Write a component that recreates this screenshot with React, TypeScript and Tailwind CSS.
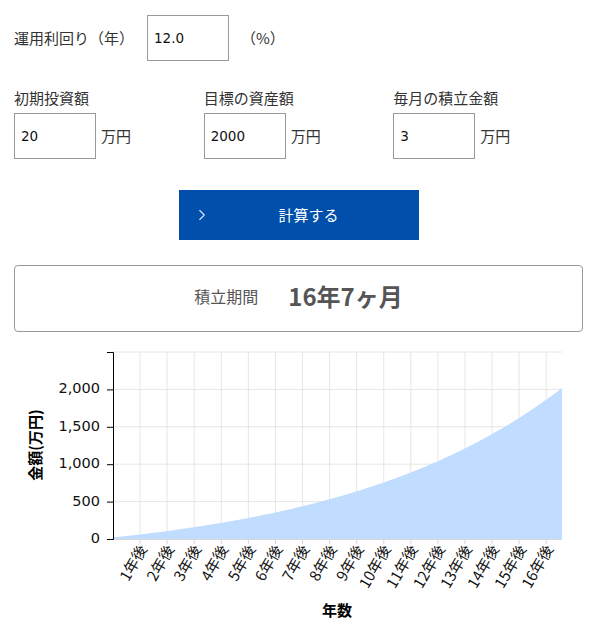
import { ChevronRight } from 'lucide-react';

const JP = { fontFamily: '"Noto Sans CJK JP", "Noto Sans", sans-serif' };

// chart geometry (svg coordinates, svg top = page y 340)
const X0 = 113;
const X1 = 562;
const Y0 = 199; // value 0
const YTOP = 12; // value 2500
const MONTHS = 199;
const MAX = 2500;

const sx = (m: number) => X0 + (m / MONTHS) * (X1 - X0);
const sy = (v: number) => Y0 - (v / MAX) * (Y0 - YTOP);

function buildArea() {
  const r = 0.01;
  let d = `M${X0},${Y0}`;
  for (let m = 0; m <= MONTHS; m++) {
    const g = Math.pow(1 + r, m);
    const v = 20 * g + 3 * ((g - 1) / r);
    d += `L${sx(m).toFixed(2)},${sy(v).toFixed(2)}`;
  }
  d += `L${X1},${Y0}Z`;
  return d;
}

function NumField({ value }: { value: string }) {
  return (
    <div
      className="flex h-[46px] w-[82px] items-center border border-[#999] bg-white pl-[6px] text-[13.5px] text-[#111]"
      style={{ fontFamily: '"DejaVu Sans", Verdana, sans-serif' }}
    >
      {value}
    </div>
  );
}

function Field({ label, value }: { label: string; value: string }) {
  return (
    <div className="w-[190px]">
      <div className="h-[22px] text-[15px] leading-[22px] text-[#333]">{label}</div>
      <div className="mt-[4px] flex items-center gap-[5px]">
        <NumField value={value} />
        <span className="text-[15px] text-[#333]">万円</span>
      </div>
    </div>
  );
}

function Chart() {
  const years = Array.from({ length: 16 }, (_, i) => i + 1);
  const yTicks = [0, 500, 1000, 1500, 2000];
  return (
    <svg width="597" height="295" className="block">
      {/* grid */}
      {[...yTicks, 2500].map((v) => (
        <line key={v} x1={X0} x2={X1} y1={sy(v)} y2={sy(v)} stroke="#e6e6e6" strokeWidth="1" />
      ))}
      {years.map((y) => (
        <line key={y} x1={sx(y * 12)} x2={sx(y * 12)} y1={YTOP} y2={Y0} stroke="#e6e6e6" strokeWidth="1" />
      ))}
      <path d={buildArea()} fill="#c0ddff" />

      {/* x axis */}
      <line x1={X0} x2={X1} y1={Y0 + 0.5} y2={Y0 + 0.5} stroke="#d6d6d6" />
      {years.map((y) => {
        const x = sx(y * 12);
        return (
          <g key={y}>
            <line x1={x} x2={x} y1={Y0} y2={Y0 + 5} stroke="#d6d6d6" />
            <text
              transform={`translate(${x + 4},${Y0 + 8}) rotate(-60)`}
              textAnchor="end"
              dominantBaseline="middle"
              fontSize="15"
              fill="#111"
              style={JP}
            >
              {y}年後
            </text>
          </g>
        );
      })}

      {/* y axis */}
      <path d={`M${X0 - 6},${YTOP + 0.5}H${X0 + 0.5}V${Y0 + 0.5}H${X0 - 6}`} fill="none" stroke="#000" />
      {yTicks.map((v) => (
        <g key={v}>
          <line x1={X0 - 6} x2={X0} y1={sy(v) + 0.5} y2={sy(v) + 0.5} stroke="#000" />
          <text
            x={X0 - 13}
            y={sy(v)}
            textAnchor="end"
            dominantBaseline="middle"
            fontSize="14.5"
            fill="#111"
            style={{ fontFamily: '"DejaVu Sans", Verdana, sans-serif' }}
          >
            {v.toLocaleString('en-US')}
          </text>
        </g>
      ))}

      <text
        transform="translate(37,105) rotate(-90)"
        textAnchor="middle"
        dominantBaseline="middle"
        fontSize="15"
        fontWeight="700"
        fill="#000"
        style={JP}
      >
        金額(万円)
      </text>
      <text x={337} y={272} textAnchor="middle" dominantBaseline="middle" fontSize="15" fontWeight="700" fill="#000" style={JP}>
        年数
      </text>
    </svg>
  );
}

export default function App() {
  return (
    <div className="h-[635px] w-[597px] overflow-hidden bg-white" style={JP}>
      <div className="px-[14px] pt-[15px]">
        <div className="flex items-center">
          <span className="w-[133px] text-[15px] text-[#333]">運用利回り（年）</span>
          <NumField value="12.0" />
          <span className="ml-[12px] text-[15px] text-[#333]">（%）</span>
        </div>

        <div className="mt-[26px] flex">
          <Field label="初期投資額" value="20" />
          <Field label="目標の資産額" value="2000" />
          <Field label="毎月の積立金額" value="3" />
        </div>

        <div className="mt-[31px] flex justify-center">
          <button className="relative flex h-[50px] w-[240px] items-center justify-center bg-[#0050ab] pl-[20px] text-[15px] text-white">
            <ChevronRight className="absolute left-[14px] top-[16px] h-[18px] w-[18px] text-[#d8e4f5]" strokeWidth={1.5} />
            計算する
          </button>
        </div>

        <div className="mt-[25px] flex h-[67px] items-center justify-center gap-[30px] rounded-[4px] border border-[#999] pb-[5px] text-[#555]">
          <span className="text-[16px]">積立期間</span>
          <span className="text-[24px] font-bold">16年7ヶ月</span>
        </div>
      </div>

      <div className="mt-[8px]">
        <Chart />
      </div>
    </div>
  );
}
